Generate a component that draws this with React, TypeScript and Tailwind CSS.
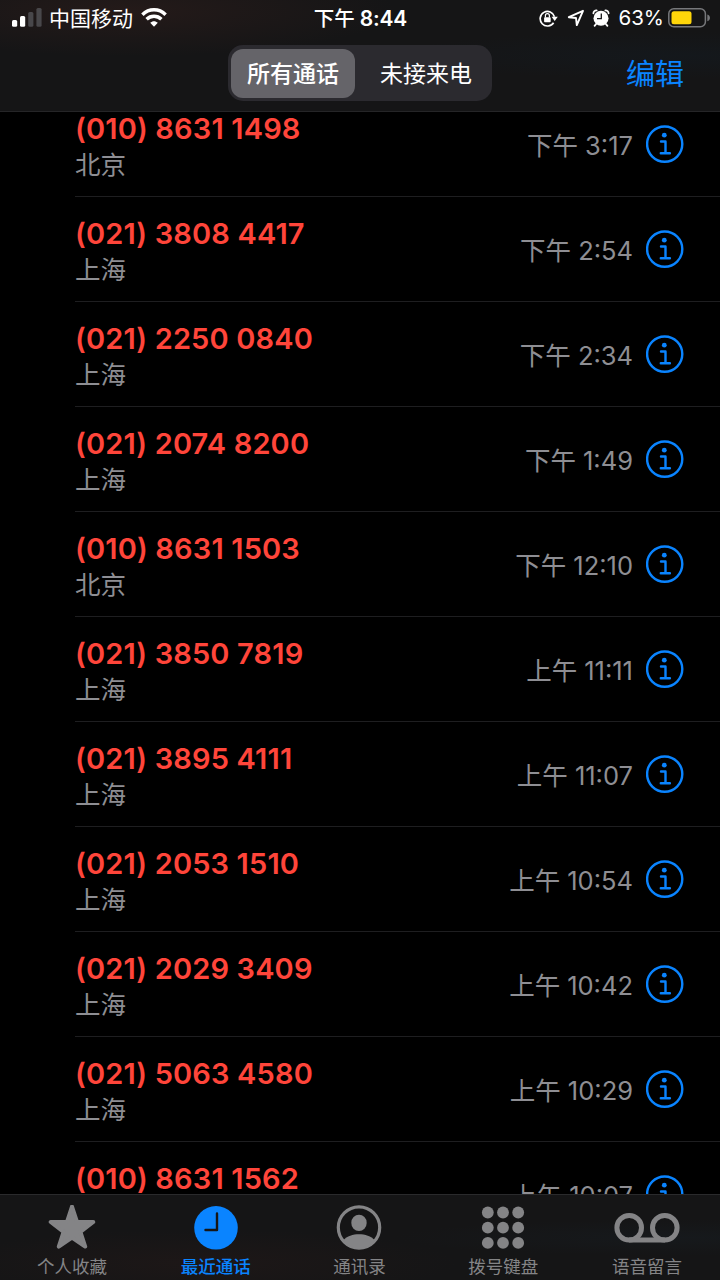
import { useState } from "react";
import type { ReactNode } from "react";
import clsx from "clsx";

type Call = { number: string; city: string; period: string; time: string };

const CALLS: Call[] = [
  { number: "(010) 8631 1498", city: "北京", period: "下午", time: "3:17" },
  { number: "(021) 3808 4417", city: "上海", period: "下午", time: "2:54" },
  { number: "(021) 2250 0840", city: "上海", period: "下午", time: "2:34" },
  { number: "(021) 2074 8200", city: "上海", period: "下午", time: "1:49" },
  { number: "(010) 8631 1503", city: "北京", period: "下午", time: "12:10" },
  { number: "(021) 3850 7819", city: "上海", period: "上午", time: "11:11" },
  { number: "(021) 3895 4111", city: "上海", period: "上午", time: "11:07" },
  { number: "(021) 2053 1510", city: "上海", period: "上午", time: "10:54" },
  { number: "(021) 2029 3409", city: "上海", period: "上午", time: "10:42" },
  { number: "(021) 5063 4580", city: "上海", period: "上午", time: "10:29" },
  { number: "(010) 8631 1562", city: "北京", period: "上午", time: "10:07" },
];

const FILTERS = ["所有通话", "未接来电"];

const TABS: { label: string; icon: ReactNode }[] = [
  { label: "个人收藏", icon: <StarIcon /> },
  { label: "最近通话", icon: <ClockIcon /> },
  { label: "通讯录", icon: <PersonIcon /> },
  { label: "拨号键盘", icon: <KeypadIcon /> },
  { label: "语音留言", icon: <VoicemailIcon /> },
];

function StarIcon() {
  return (
    <svg width="48" height="46" viewBox="0 0 48 46" fill="currentColor" stroke="currentColor" strokeWidth="4" strokeLinejoin="round">
      <path d="M24 1.500 29 16.900 45.300 17 32.400 26.800 37.200 41.600 24 32.700 10.800 41.600 15.600 26.800 2.700 17 19 16.900Z" />
    </svg>
  );
}

function ClockIcon() {
  return (
    <svg width="44" height="44" viewBox="0 0 44 44">
      <circle cx="22" cy="21.800" r="21.800" fill="#0a84ff" />
      <path d="M23 7.500V24H11.500" fill="none" stroke="#171616" strokeWidth="2.400" strokeLinecap="round" strokeLinejoin="round" />
    </svg>
  );
}

function PersonIcon() {
  return (
    <svg width="46" height="46" viewBox="0 0 46 46">
      <clipPath id="person">
        <circle cx="23" cy="22.500" r="21" />
      </clipPath>
      <circle cx="23" cy="22.500" r="20.700" fill="none" stroke="currentColor" strokeWidth="3.200" />
      <ellipse cx="23" cy="17.900" rx="7.700" ry="8.200" fill="currentColor" />
      <path d="M7 35.500C11 31 17 29.300 23 29.300S35 31 39 35.500V46H7Z" fill="currentColor" clipPath="url(#person)" />
    </svg>
  );
}

function KeypadIcon() {
  return (
    <svg width="44" height="44" viewBox="0 0 44 44" fill="currentColor">
      {[6.5, 21.7, 36.9].map((y) => [6.8, 22, 37.2].map((x) => <circle key={`${x}-${y}`} cx={x} cy={y} r="5.9" />))}
    </svg>
  );
}

function VoicemailIcon() {
  return (
    <svg width="66" height="32" viewBox="0 0 66 32" fill="none" stroke="currentColor" strokeWidth="5">
      <circle cx="15.200" cy="15.800" r="12.300" />
      <circle cx="50.800" cy="15.800" r="12.300" />
      <path d="M15 28.100H51" />
    </svg>
  );
}

function InfoIcon() {
  return (
    <svg className="shrink-0" width="38" height="38" viewBox="0 0 38 38" fill="none" stroke="#0a84ff" strokeWidth="2.400">
      <circle cx="18.700" cy="19.100" r="17.600" />
      <circle cx="18.300" cy="10.200" r="2.400" fill="#0a84ff" stroke="none" />
      <path d="M15 16.500H19.500V28M14.800 28.200H23.900" strokeWidth="2.400" strokeLinecap="round" strokeLinejoin="round" />
    </svg>
  );
}

function SignalIcon() {
  return (
    <svg width="30" height="20" viewBox="0 0 30 20" fill="#fff">
      <rect x="0" y="12" width="5.200" height="6.700" rx="1.500" />
      <rect x="8" y="8" width="5.200" height="10.700" rx="1.500" />
      <rect x="16.200" y="4" width="5.200" height="14.700" rx="1.500" fill="#48474a" />
      <rect x="24.400" y="0" width="5.200" height="18.700" rx="1.500" fill="#48474a" />
    </svg>
  );
}

function WifiIcon() {
  return (
    <svg width="26" height="20" viewBox="0 0 26 20" fill="none" stroke="#fff" strokeWidth="3.500">
      <path d="M1.400 6.700C8 0.200 18 0.200 24.600 6.700" />
      <path d="M5.600 11.200C9.800 7.200 16.200 7.200 20.400 11.200" />
      <path d="M9.200 14.800C11.500 12.700 14.500 12.700 16.800 14.800L13 18.700Z" fill="#fff" stroke="none" />
    </svg>
  );
}

function RotationLockIcon() {
  return (
    <svg width="19" height="18" viewBox="0 0 19 18" fill="none" stroke="#fff" strokeWidth="1.700">
      <path d="M14.600 13.700A7.300 7.300 0 1 1 15.500 7.700" />
      <path d="M12.600 7.700H18.800L15.700 12Z" fill="#fff" stroke="none" />
      <rect x="5.100" y="8.200" width="6.600" height="5" rx="0.800" fill="#fff" stroke="none" />
      <path d="M6.400 8.500V6.700A2 2 0 0 1 10.400 6.700V8.500" strokeWidth="1.200" />
    </svg>
  );
}

function LocationIcon() {
  return (
    <svg width="18" height="18" viewBox="0 0 18 18" fill="none" stroke="#fff" strokeWidth="1.900" strokeLinejoin="round">
      <path d="M16 1.800 1.800 8.200 9 9 9.800 16.100Z" />
    </svg>
  );
}

function AlarmIcon() {
  return (
    <svg width="18" height="18" viewBox="0 0 18 18">
      <circle cx="9" cy="9.200" r="7.500" fill="#fff" />
      <path d="M1.400 4.300A3 3 0 0 1 4.600 1.400M16.600 4.300A3 3 0 0 0 13.400 1.400M4 15.200 2.600 16.800M14 15.200 15.400 16.800" fill="none" stroke="#fff" strokeWidth="1.800" strokeLinecap="round" />
      <path d="M9.300 4.500V9.700H5" fill="none" stroke="#171719" strokeWidth="1.300" />
    </svg>
  );
}

function BatteryIcon() {
  return (
    <svg width="43" height="20" viewBox="0 0 43 20">
      <rect x="0.800" y="0.800" width="36.600" height="18" rx="5" fill="none" stroke="#77787b" strokeWidth="1.500" />
      <rect x="3.500" y="3.300" width="20" height="13" rx="2.500" fill="#ffd60a" />
      <path d="M39.300 6.500C42.800 7.500 42.800 12.300 39.300 13.300Z" fill="#77787b" />
    </svg>
  );
}

function StatusBar() {
  return (
    <div className="grid h-9 grid-cols-[1fr_auto_1fr] items-center pl-3 pr-[9px] text-white">
      <div className="flex items-center">
        <SignalIcon />
        <span className="ml-[7px] text-[21px] leading-none">中国移动</span>
        <span className="ml-2"><WifiIcon /></span>
      </div>
      <div className="flex items-center gap-[5px] pr-0.5 text-[20.500px] font-medium leading-none">
        <span className="pt-0.5">下午</span>
        <span className="pt-px text-[21px] font-semibold tracking-[-0.2px]">8:44</span>
      </div>
      <div className="flex items-center justify-end">
        <RotationLockIcon />
        <span className="ml-[9px]"><LocationIcon /></span>
        <span className="ml-[7px]"><AlarmIcon /></span>
        <span className="ml-2 mr-[4px] pt-px text-[20.500px] leading-none">63%</span>
        <BatteryIcon />
      </div>
    </div>
  );
}

function CallRow({ call }: { call: Call }) {
  return (
    <li className="ml-[75px] flex h-[105px] shrink-0 items-center border-b border-[#1e1e20] pr-[36px]">
      <div className="flex-1 pt-[5px]">
        <p className="whitespace-pre text-[29px] font-semibold leading-9 tracking-[0.150px] text-[#ff453a]">{call.number}</p>
        <p className="text-[25.500px] leading-9 text-[#8e8e93]">{call.city}</p>
      </div>
      <div className="mr-[13px] mt-[3px] flex items-center gap-[7px] text-[25.500px] leading-9 text-[#8e8e93]">
        <span>{call.period}</span>
        <span>{call.time}</span>
      </div>
      <InfoIcon />
    </li>
  );
}

export default function App() {
  const [filter, setFilter] = useState(0);
  const [tab, setTab] = useState(1);

  return (
    <div className="flex h-[1280px] w-[720px] flex-col overflow-hidden bg-black font-['Inter','Noto_Sans_CJK_SC',sans-serif]">
      <header className="h-28 shrink-0 border-b border-[#252527] bg-[#151516] bg-[radial-gradient(ellipse_at_18%_10%,#241a19_0%,transparent_32%),radial-gradient(ellipse_at_95%_50%,#14181c_0%,transparent_30%)]">
        <StatusBar />
        <div className="mt-[9px] grid grid-cols-[1fr_264px_1fr] items-center">
          <div />
          <div className="grid h-14 grid-cols-[124px_1fr] gap-2 rounded-[15px] bg-[#2b2a2f] px-[3px] py-[3.500px]">
            {FILTERS.map((label, i) => (
              <button
                key={label}
                onClick={() => setFilter(i)}
                className={clsx("rounded-xl pt-0.5 text-[23px] leading-none text-white", filter === i ? "bg-[#656469] font-medium" : "font-normal")}
              >
                {label}
              </button>
            ))}
          </div>
          <button className="mr-9 justify-self-end pt-[3px] text-[29px] leading-none text-[#0a84ff]">编辑</button>
        </div>
      </header>

      <main className="min-h-0 flex-1 overflow-hidden">
        <ul className="-mt-5 flex flex-col">
          {CALLS.map((call) => (
            <CallRow key={call.number} call={call} />
          ))}
        </ul>
      </main>

      <nav className="grid h-[86px] shrink-0 grid-cols-5 border-t border-[#2a2a2c] bg-[#151516] bg-[radial-gradient(ellipse_at_28%_80%,#1d1717_0%,transparent_35%),radial-gradient(ellipse_at_95%_50%,#16191c_0%,transparent_30%)] pr-px">
        {TABS.map((t, i) => (
          <button key={t.label} onClick={() => setTab(i)} className={clsx("flex flex-col items-center", tab === i ? "font-medium text-[#0a84ff]" : "text-[#848486]")}>
            <span className="mt-2 flex h-[50px] items-center">{t.icon}</span>
            <span className="mt-1 text-[17.500px] leading-5">{t.label}</span>
          </button>
        ))}
      </nav>
    </div>
  );
}
